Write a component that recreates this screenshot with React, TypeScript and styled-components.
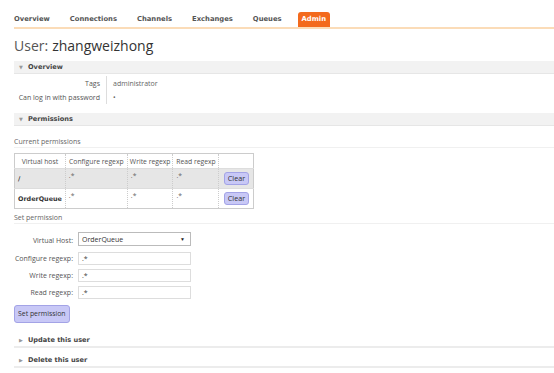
import React from "react";
import styled, { createGlobalStyle } from "styled-components";

const GlobalStyle = createGlobalStyle`
    body {
        margin: 0;
        background: #fff;
        font-family: "Open Sans", "Liberation Sans", sans-serif;
        color: #444;
    }
`;

const Page = styled.div`
    width: 554px;
    height: 373px;
    overflow: hidden;
    padding-left: 14px;
    box-sizing: border-box;
`;

const Nav = styled.ul`
    list-style: none;
    margin: 0;
    padding: 12px 0 0 0;
    display: flex;
    gap: 12px;
    border-bottom: 2px solid #fbdcb8;
`;

const Tab = styled.li<{ $active?: boolean }>`
    padding: 0 4px;
    height: 15px;
    line-height: 15px;
    font-family: "DejaVu Sans", Verdana, sans-serif;
    font-size: 6.8px;
    font-weight: bold;
    color: ${(p) => (p.$active ? "#fff" : "#555")};
    background: ${(p) => (p.$active ? "#f36a1d" : "transparent")};
    border-radius: 3px 3px 0 0;
    &:first-child {
        margin-left: -4px;
    }
`;

const Title = styled.h1`
    margin: 8px 0 7px 0;
    font-size: 14px;
    font-weight: normal;
    line-height: 17px;
    color: #333;
    span {
        color: #555;
        margin-right: 4px;
    }
`;

const SectionHeader = styled.div<{ $open?: boolean }>`
    display: flex;
    align-items: center;
    height: 12px;
    padding-left: 5px;
    background: ${(p) => (p.$open ? "#f2f2f2" : "#fff")};
    border-bottom: ${(p) => (p.$open ? "1px solid #e6e6e6" : "2px solid #ececec")};
    font-family: "DejaVu Sans", Verdana, sans-serif;
    font-size: 6.6px;
    font-weight: bold;
    color: #444;
`;

const Arrow = styled.span`
    width: 9px;
    font-size: 5px;
    color: #999;
`;

const InfoTable = styled.table`
    border-collapse: collapse;
    margin: 2px 0 9px 0;
    font-size: 7px;
    th {
        width: 86px;
        padding: 0 6px 0 0;
        text-align: right;
        font-weight: normal;
        color: #555;
        height: 14px;
        white-space: nowrap;
    }
    td {
        border-left: 1px solid #ddd;
        padding: 0 0 0 6px;
        color: #666;
    }
`;

const SubTitle = styled.div<{ $top: number }>`
    font-size: 7px;
    color: #666;
    height: 11px;
    line-height: 11px;
    border-bottom: 1px solid #f0f0f0;
    margin: ${(p) => p.$top}px 0 5px 0;
`;

const PermTable = styled.table`
    border-collapse: collapse;
    border: 1px solid #ccc;
    font-size: 6.8px;
    color: #555;
    table-layout: fixed;
    th {
        font-weight: normal;
        height: 14px;
        padding: 0 2px;
        border-right: 1px dotted #ccc;
        text-align: center;
        white-space: nowrap;
        overflow: hidden;
    }
    td {
        height: 17px;
        padding: 0 3px;
        border-right: 1px dotted #ccc;
        border-top: 1px solid #ddd;
        vertical-align: middle;
    }
`;

const Col = styled.col<{ $w: number }>`
    width: ${(p) => p.$w}px;
`;

const Row = styled.tr<{ $alt?: boolean }>`
    background: ${(p) => (p.$alt ? "#e6e6e6" : "#fff")};
`;

const HostCell = styled.td`
    font-family: "DejaVu Sans", Verdana, sans-serif;
    font-weight: bold;
    font-size: 6.4px;
    color: #333;
`;

const Regex = styled.td`
    vertical-align: top !important;
    padding-top: 2px !important;
    color: #666;
`;

const Button = styled.button<{ $big?: boolean }>`
    display: ${(p) => (p.$big ? "block" : "inline-block")};
    font-family: "Open Sans", "Liberation Sans", sans-serif;
    font-size: ${(p) => (p.$big ? "6.9px" : "7.2px")};
    line-height: 1;
    color: #333;
    background: #c8c8f6;
    border: 1px solid #a3a3e6;
    border-radius: 3px;
    padding: 0 3px;
    height: ${(p) => (p.$big ? "18px" : "13px")};
    cursor: pointer;
`;

const ClearCell = styled.td`
    text-align: center;
`;

const Form = styled.form`
    display: grid;
    grid-template-columns: 59px 113px;
    column-gap: 5px;
    row-gap: 4px;
    align-items: center;
    margin: 8px 0 6px 0;
    font-size: 7px;
    color: #555;
`;

const Label = styled.label`
    text-align: right;
    white-space: nowrap;
`;

const Select = styled.div`
    display: flex;
    justify-content: space-between;
    align-items: center;
    height: 14px;
    box-sizing: border-box;
    border: 1px solid #bbb;
    padding: 0 5px 0 3px;
    color: #333;
    margin-bottom: 2px;
    span {
        font-size: 5px;
        color: #222;
    }
`;

const Input = styled.div`
    height: 13px;
    box-sizing: border-box;
    border: 1px solid #ddd;
    padding: 0 3px;
    line-height: 11px;
    color: #444;
`;

const Footer = styled.div`
    margin-top: 11px;
    display: flex;
    flex-direction: column;
    gap: 6px;
`;

function App() {
    const tabs = ["Overview", "Connections", "Channels", "Exchanges", "Queues", "Admin"];
    const perms = [
        { host: "/", alt: true },
        { host: "OrderQueue", alt: false },
    ];
    const fields = ["Configure regexp:", "Write regexp:", "Read regexp:"];
    return (
        <Page>
            <GlobalStyle />
            <Nav>
                {tabs.map((t) => (
                    <Tab key={t} $active={t === "Admin"}>
                        {t}
                    </Tab>
                ))}
            </Nav>
            <Title>
                <span>User:</span>zhangweizhong
            </Title>

            <SectionHeader $open>
                <Arrow>▼</Arrow>Overview
            </SectionHeader>
            <InfoTable>
                <tbody>
                    <tr>
                        <th>Tags</th>
                        <td>administrator</td>
                    </tr>
                    <tr>
                        <th>Can log in with password</th>
                        <td>•</td>
                    </tr>
                </tbody>
            </InfoTable>

            <SectionHeader $open>
                <Arrow>▼</Arrow>Permissions
            </SectionHeader>
            <SubTitle $top={10}>Current permissions</SubTitle>
            <PermTable>
                <colgroup>
                    <Col $w={48} />
                    <Col $w={62} />
                    <Col $w={45} />
                    <Col $w={46} />
                    <Col $w={35} />
                </colgroup>
                <thead>
                    <tr>
                        <th>Virtual host</th>
                        <th>Configure regexp</th>
                        <th>Write regexp</th>
                        <th>Read regexp</th>
                        <th></th>
                    </tr>
                </thead>
                <tbody>
                    {perms.map((p) => (
                        <Row key={p.host} $alt={p.alt}>
                            <HostCell>{p.host}</HostCell>
                            <Regex>.*</Regex>
                            <Regex>.*</Regex>
                            <Regex>.*</Regex>
                            <ClearCell>
                                <Button>Clear</Button>
                            </ClearCell>
                        </Row>
                    ))}
                </tbody>
            </PermTable>

            <SubTitle $top={3}>Set permission</SubTitle>
            <Form>
                <Label>Virtual Host:</Label>
                <Select>
                    OrderQueue<span>▼</span>
                </Select>
                {fields.map((f) => (
                    <React.Fragment key={f}>
                        <Label>{f}</Label>
                        <Input>.*</Input>
                    </React.Fragment>
                ))}
            </Form>
            <Button $big>Set permission</Button>

            <Footer>
                <SectionHeader>
                    <Arrow>▶</Arrow>Update this user
                </SectionHeader>
                <SectionHeader>
                    <Arrow>▶</Arrow>Delete this user
                </SectionHeader>
            </Footer>
        </Page>
    );
}

export default App;
